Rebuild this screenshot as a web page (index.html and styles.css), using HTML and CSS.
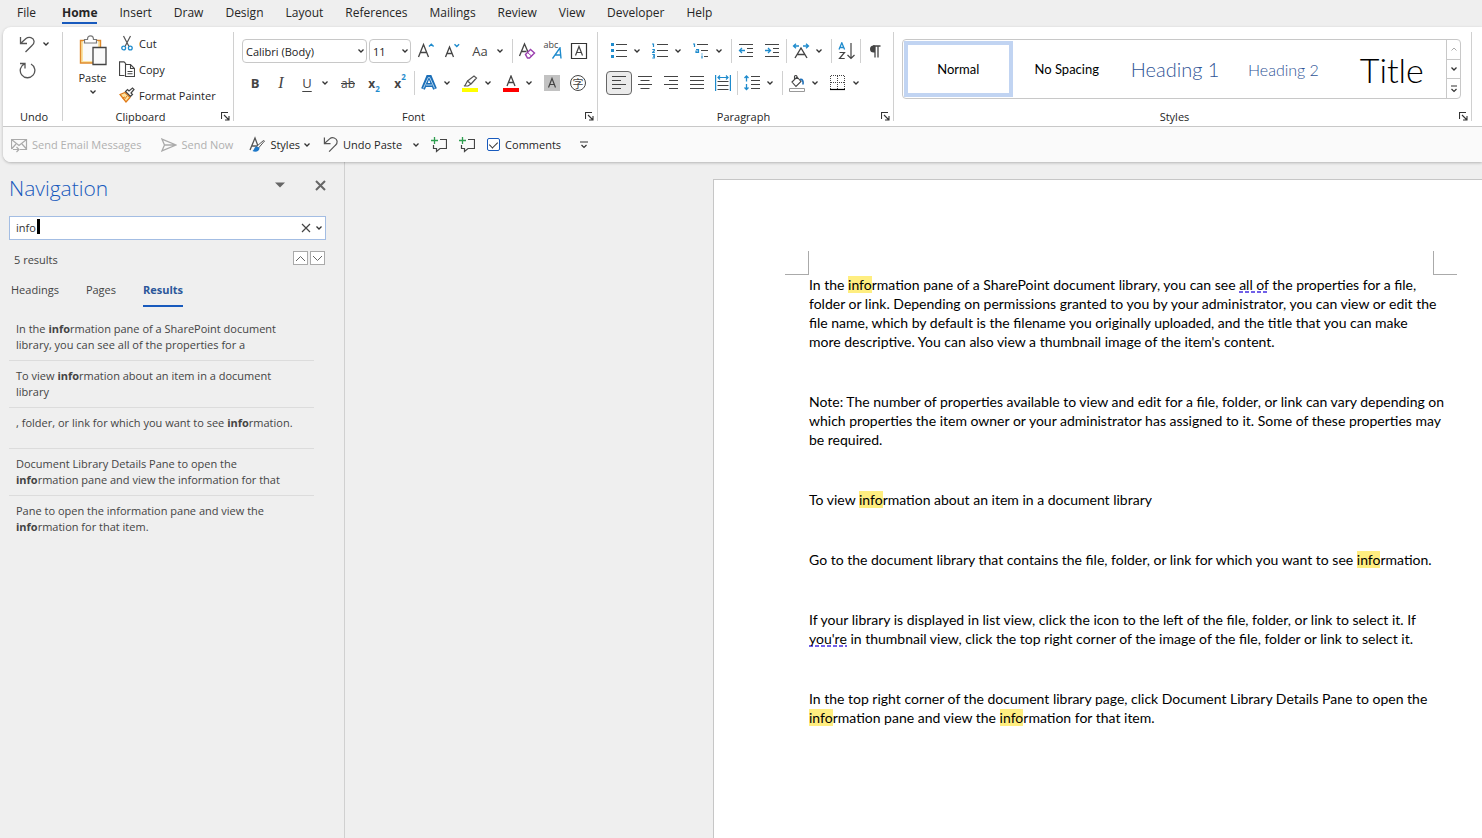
FILE: index.html
```html
<!DOCTYPE html>
<html lang="en">
<head>
    <meta charset="UTF-8">
    <title>Document - Word</title>
    <link rel="stylesheet" href="styles.css">
</head>
<body>
    <!-- Shared icons -->
    <svg class="defs" width="0" height="0" aria-hidden="true">
        <symbol id="chev" viewBox="0 0 8 6"><path d="M1.5 1.5 4 4l2.5-2.5" fill="none" stroke="#333" stroke-width="1.3"/></symbol>
        <symbol id="launch" viewBox="0 0 9 9"><path d="M.5 7V.5H7M3 3l4.500 4.500M8 4v4H4" fill="none" stroke="#333" stroke-width="1.1"/></symbol>
        <symbol id="undo" viewBox="0 0 17 17"><path d="M1.500 1v6.500H8M1.500 7.500 7 2.500c3-2.400 7.500-.8 8 2.500.3 2-.7 3.400-2 4.500L6.500 16" fill="none" stroke="#555" stroke-width="1.3"/></symbol>
        <symbol id="comment" viewBox="0 0 16 16"><path d="M9 2.500h6.500v9H9l-3.500 3v-3h-3V8" fill="none" stroke="#444" stroke-width="1.2"/><path d="M3.500 0v7M0 3.500h7" stroke="#2e9e4f" stroke-width="1.3"/></symbol>
    </svg>

    <nav class="tabs">
        <a href="#" class="file">File</a>
        <a href="#" class="active">Home</a>
        <a href="#">Insert</a>
        <a href="#">Draw</a>
        <a href="#">Design</a>
        <a href="#">Layout</a>
        <a href="#">References</a>
        <a href="#">Mailings</a>
        <a href="#">Review</a>
        <a href="#">View</a>
        <a href="#">Developer</a>
        <a href="#">Help</a>
    </nav>

    <header class="ribbon">
        <div class="groups">
            <!-- Undo -->
            <section class="group undo-group">
                <div class="group-body undo-body">
                    <div class="row">
                        <button class="btn" aria-label="Undo"><svg width="17" height="17"><use href="#undo"/></svg></button>
                        <button class="chev" aria-label="Undo list"><svg width="8" height="6"><use href="#chev"/></svg></button>
                    </div>
                    <button class="btn" aria-label="Redo"><svg width="17" height="17" viewBox="0 0 17 17"><path d="M1 1.500h5V6.500M5.500 1.800A7.300 7.300 0 1 0 12 2" fill="none" stroke="#555" stroke-width="1.3"/></svg></button>
                </div>
                <div class="group-foot"><span>Undo</span></div>
            </section>

            <!-- Clipboard -->
            <section class="group clip-group">
                <div class="group-body clip-body">
                    <button class="paste">
                        <svg width="28" height="31" viewBox="0 0 28 31">
                            <path d="M1.500 5.500h20V28h-20z" fill="#fbe3a3" stroke="#e08a2c" stroke-width="1.400"/>
                            <path d="M4 6h15v20H4z" fill="#fafafa"/>
                            <path d="M5.500 8V4.500h3C8.500 2 9.800.8 11.500.8s3 1.200 3 3.700h3V8z" fill="#fff" stroke="#777" stroke-width="1.200"/>
                            <path d="M14 12.500h13v17H14z" fill="#fafafa" stroke="#444" stroke-width="1.300"/>
                        </svg>
                        <span>Paste</span>
                        <svg width="8" height="6"><use href="#chev"/></svg>
                    </button>
                    <div class="clip-list">
                        <button><svg width="16" height="16" viewBox="0 0 16 16"><path d="M4.500 1 10 11.500M11.500 1 6 11.500" stroke="#555" stroke-width="1.200"/><circle cx="4.700" cy="13" r="1.900" fill="none" stroke="#1e8bcd" stroke-width="1.300"/><circle cx="11.300" cy="13" r="1.900" fill="none" stroke="#1e8bcd" stroke-width="1.300"/></svg>Cut</button>
                        <button><svg width="16" height="16" viewBox="0 0 16 16"><path d="M5.500 14.500h-5V.8h4.500l2 2" fill="none" stroke="#444" stroke-width="1.200"/><path d="M6.500 3.500h5l4 4v8h-9zM11.500 3.500v4h4M8.500 10.500h5M8.500 12.800h5" fill="none" stroke="#444" stroke-width="1.100"/></svg>Copy</button>
                        <button><svg width="16" height="16" viewBox="0 0 16 16"><path d="m1 7.500 5-2 5 5L7 15z" fill="#fbe3a3" stroke="#e07b1a" stroke-width="1.300"/><path d="m3 11 3-1M5 13l3-4" stroke="#e07b1a"/><path d="m6.500 4.500 5 5 2-2-1.500-1.500 3-3.500L13.500 1l-3.500 3-1.500-1.500z" fill="#fff" stroke="#444" stroke-width="1.200"/></svg>Format Painter</button>
                    </div>
                </div>
                <div class="group-foot"><span>Clipboard</span><button aria-label="Clipboard options"><svg width="9" height="9"><use href="#launch"/></svg></button></div>
            </section>

            <!-- Font -->
            <section class="group">
                <div class="group-body">
                    <div class="row">
                        <div class="combo combo-font">
                            <select aria-label="Font"><option>Calibri (Body)</option></select>
                            <svg width="8" height="6"><use href="#chev"/></svg>
                        </div>
                        <div class="combo combo-size">
                            <select aria-label="Font size"><option>11</option></select>
                            <svg width="8" height="6"><use href="#chev"/></svg>
                        </div>
                        <button class="btn" aria-label="Grow font"><svg width="18" height="18" viewBox="0 0 18 18"><path d="m1.500 15 5-12.500 5 12.500M3.300 10.500h6.400" fill="none" stroke="#444" stroke-width="1.300"/><path d="m12 4.500 2.300-2.300 2.300 2.300" fill="none" stroke="#1e8bcd" stroke-width="1.400"/></svg></button>
                        <button class="btn" aria-label="Shrink font"><svg width="18" height="18" viewBox="0 0 18 18"><path d="m2.500 15 4-10 4 10M4 11.500h5" fill="none" stroke="#444" stroke-width="1.300"/><path d="m11.500 2.200 2.300 2.300 2.300-2.300" fill="none" stroke="#1e8bcd" stroke-width="1.400"/></svg></button>
                        <div class="split">
                            <button class="btn case" aria-label="Change case">Aa</button>
                            <button class="chev" aria-label="Case options"><svg width="8" height="6"><use href="#chev"/></svg></button>
                        </div>
                        <i class="sep"></i>
                        <button class="btn" aria-label="Clear formatting"><svg width="18" height="18" viewBox="0 0 18 18"><path d="M1.500 14 6.500 2l3.500 8M3.500 9.500h5" fill="none" stroke="#444" stroke-width="1.300"/><path d="m7.500 12.500 5-5 4 3.500-5 5h-2z" fill="#fff" stroke="#9a3fae" stroke-width="1.400"/><path d="m9.500 10.500 4 3.500" stroke="#9a3fae"/></svg></button>
                        <button class="btn phonetic" aria-label="Phonetic guide"><span>abc</span><svg width="10" height="12" viewBox="0 0 10 12"><path d="M.5 11.500 8 .8l1 10.700M3 8h6" fill="none" stroke="#1e8bcd" stroke-width="1.400"/></svg></button>
                        <button class="btn" aria-label="Character border"><svg width="18" height="18" viewBox="0 0 18 18"><path d="M1.500 1.500h15v15h-15z" fill="none" stroke="#333" stroke-width="1.200"/><path d="M5.500 13.500 9 4.500l3.500 9M6.700 10.500h4.600" fill="none" stroke="#444" stroke-width="1.200"/></svg></button>
                    </div>
                    <div class="row">
                        <button class="btn bold">B</button>
                        <button class="btn italic">I</button>
                        <div class="split">
                            <button class="btn underline">U</button>
                            <button class="chev" aria-label="Underline style"><svg width="8" height="6"><use href="#chev"/></svg></button>
                        </div>
                        <button class="btn strike">ab</button>
                        <button class="btn script">x<sub>2</sub></button>
                        <button class="btn script">x<sup>2</sup></button>
                        <i class="sep"></i>
                        <div class="split">
                            <button class="btn" aria-label="Text effects"><svg width="16" height="16" viewBox="0 0 16 16"><path d="M2 14 7 2h2l5 12M4.500 10h7" fill="none" stroke="#1c6fb8" stroke-width="4"/><path d="m2.300 13.500 5-11h1.400l5 11M4.800 10h6.400" fill="none" stroke="#d9ecfa" stroke-width=".8"/></svg></button>
                            <button class="chev" aria-label="Effect options"><svg width="8" height="6"><use href="#chev"/></svg></button>
                        </div>
                        <div class="split">
                            <button class="btn" aria-label="Highlight"><svg width="16" height="17" viewBox="0 0 16 17"><path d="M0 13h16v4H0z" fill="#ff0"/><path d="M3 10.500 5.500 6l3.500 3-3 2H2zM5.500 6 12 1l2.500 2L9 9" fill="#fff" stroke="#555" stroke-width="1.200"/></svg></button>
                            <button class="chev" aria-label="Highlight colors"><svg width="8" height="6"><use href="#chev"/></svg></button>
                        </div>
                        <div class="split">
                            <button class="btn" aria-label="Font color"><svg width="16" height="17" viewBox="0 0 16 17"><path d="M0 13h16v4H0z" fill="#f00"/><path d="m4 11 4-10 4 10M5.500 7.500h5" fill="none" stroke="#444" stroke-width="1.300"/></svg></button>
                            <button class="chev" aria-label="Font colors"><svg width="8" height="6"><use href="#chev"/></svg></button>
                        </div>
                        <button class="btn" aria-label="Character shading"><svg width="16" height="16" viewBox="0 0 16 16"><path d="M0 0h16v16H0z" fill="#c2c2c2"/><path d="m4.500 12.500 3.500-9 3.500 9M5.700 9.500h4.600" fill="none" stroke="#444" stroke-width="1.200"/></svg></button>
                        <button class="btn"><span class="enclosed">字</span></button>
                    </div>
                </div>
                <div class="group-foot"><span>Font</span><button aria-label="Font options"><svg width="9" height="9"><use href="#launch"/></svg></button></div>
            </section>

            <!-- Paragraph -->
            <section class="group">
                <div class="group-body">
                    <div class="row">
                        <div class="split">
                            <button class="btn" aria-label="Bullets"><svg width="16" height="16" viewBox="0 0 16 16"><path d="M0 0h3v3H0zM0 6h3v3H0zM0 12h3v3H0z" fill="#1e8bcd"/><path d="M5 1.500h11M5 7.500h11M5 13.500h11" stroke="#444"/></svg></button>
                            <button class="chev" aria-label="Bullet library"><svg width="8" height="6"><use href="#chev"/></svg></button>
                        </div>
                        <div class="split">
                            <button class="btn" aria-label="Numbering"><svg width="16" height="16" viewBox="0 0 16 16"><path d="M0 1h1.500v3M.3 6.500h2v1.200L.5 9.500h2.300M.3 11.500h2v3.500h-2M1 13.200h1.300" fill="none" stroke="#1e8bcd" stroke-width="1.200"/><path d="M5 1.500h11M5 7.500h11M5 13.500h11" stroke="#444"/></svg></button>
                            <button class="chev" aria-label="Numbering library"><svg width="8" height="6"><use href="#chev"/></svg></button>
                        </div>
                        <div class="split">
                            <button class="btn" aria-label="Multilevel list"><svg width="16" height="16" viewBox="0 0 16 16"><path d="M0 1h1.500v3M3 6.500h2.500v3H3V8h2.500M9 10.500v1M9 12.500v3" fill="none" stroke="#1e8bcd" stroke-width="1.200"/><path d="M4 1.500h11M8 7.500h7M11 13.500h4" stroke="#444"/></svg></button>
                            <button class="chev" aria-label="List library"><svg width="8" height="6"><use href="#chev"/></svg></button>
                        </div>
                        <i class="sep"></i>
                        <button class="btn" aria-label="Decrease indent"><svg width="16" height="14" viewBox="0 0 16 14"><path d="M1 .5h14M9 4.500h6M9 8.500h6M1 12.500h14" stroke="#444"/><path d="M7 6.500H1.500M4 4 1.500 6.500 4 9" fill="none" stroke="#1e8bcd" stroke-width="1.300"/></svg></button>
                        <button class="btn" aria-label="Increase indent"><svg width="16" height="14" viewBox="0 0 16 14"><path d="M1 .5h14M9 4.500h6M9 8.500h6M1 12.500h14" stroke="#444"/><path d="M1 6.500h5.500M4 4l2.500 2.500L4 9" fill="none" stroke="#1e8bcd" stroke-width="1.300"/></svg></button>
                        <i class="sep"></i>
                        <div class="split">
                            <button class="btn" aria-label="Asian layout"><svg width="18" height="16" viewBox="0 0 18 16"><path d="m3 15 6-10 6 10M5.500 11.500h7" fill="none" stroke="#444" stroke-width="1.400"/><path d="M7 3H1.500M4 .8 1.500 3 4 5.200M11 3h5.500M14 .8 16.500 3 14 5.200" fill="none" stroke="#1e8bcd" stroke-width="1.300"/></svg></button>
                            <button class="chev" aria-label="Asian layout options"><svg width="8" height="6"><use href="#chev"/></svg></button>
                        </div>
                        <i class="sep"></i>
                        <button class="btn" aria-label="Sort"><svg width="17" height="18" viewBox="0 0 17 18"><path d="M1 7.500 3.800.8l2.800 6.700M2 5.500h3.600" fill="none" stroke="#1e8bcd" stroke-width="1.300"/><path d="M1.500 10.500h5L1.500 16.500h5.200M13 1v15.500M9.500 13l3.500 3.500 3.500-3.500" fill="none" stroke="#444" stroke-width="1.200"/></svg></button>
                        <i class="sep"></i>
                        <button class="btn" aria-label="Show marks"><svg width="12" height="13" viewBox="0 0 12 13"><path d="M6 .5H4.500a3.500 3.500 0 0 0 0 7H6z" fill="#444"/><path d="M4 1h7.500M6 1v11.500M9 1v11.500" stroke="#444" stroke-width="1.300"/></svg></button>
                    </div>
                    <div class="row">
                        <button class="btn pressed" aria-label="Align left"><svg width="14" height="14" viewBox="0 0 14 14"><path d="M0 .5h14M0 4.500h9M0 8.500h14M0 12.500h9" stroke="#444"/></svg></button>
                        <button class="btn" aria-label="Center"><svg width="14" height="14" viewBox="0 0 14 14"><path d="M0 .5h14M2.500 4.500h9M0 8.500h14M2.500 12.500h9" stroke="#444"/></svg></button>
                        <button class="btn" aria-label="Align right"><svg width="14" height="14" viewBox="0 0 14 14"><path d="M0 .5h14M5 4.500h9M0 8.500h14M5 12.500h9" stroke="#444"/></svg></button>
                        <button class="btn" aria-label="Justify"><svg width="14" height="14" viewBox="0 0 14 14"><path d="M0 .5h14M0 4.500h14M0 8.500h14M0 12.500h14" stroke="#444"/></svg></button>
                        <button class="btn" aria-label="Distributed"><svg width="16" height="16" viewBox="0 0 16 16"><path d="M.6 0v16M15.400 0v16M3 2.500h10M5 .5l-2 2 2 2M11 .5l2 2-2 2" fill="none" stroke="#1e8bcd" stroke-width="1.200"/><path d="M2.500 6.500h11M2.500 10.500h11M2.500 14.500h11" stroke="#444"/></svg></button>
                        <i class="sep"></i>
                        <div class="split">
                            <button class="btn" aria-label="Line spacing"><svg width="16" height="16" viewBox="0 0 16 16"><path d="M2.500 1v5.500M.5 3l2-2 2 2M2.500 9v5.500M.5 12.500l2 2 2-2" fill="none" stroke="#1e8bcd" stroke-width="1.300"/><path d="M7 1.500h9M7 5.500h9M7 9.500h9M7 13.500h9" stroke="#444"/></svg></button>
                            <button class="chev" aria-label="Spacing options"><svg width="8" height="6"><use href="#chev"/></svg></button>
                        </div>
                        <i class="sep"></i>
                        <div class="split">
                            <button class="btn" aria-label="Shading"><svg width="16" height="17" viewBox="0 0 16 17"><path d="M.5 13.500h15v3H.5z" fill="#fff" stroke="#999"/><path d="m3 7 5-5 4 4.500-5 5zM8 4V1.500a1.300 1.300 0 0 0-2.500 0V4" fill="#fff" stroke="#444" stroke-width="1.100"/><path d="M11 4.500c2.500-.5 3.500 1.500 3 5" fill="none" stroke="#1e6fb8" stroke-width="1.600"/></svg></button>
                            <button class="chev" aria-label="Shading colors"><svg width="8" height="6"><use href="#chev"/></svg></button>
                        </div>
                        <div class="split">
                            <button class="btn" aria-label="Borders"><svg width="16" height="16" viewBox="0 0 16 16"><path d="M1 .5h14M1 7.500h14M.5 1v13M7.500 1v13M14.500 1v13" fill="none" stroke="#444" stroke-dasharray="1 1"/><path d="M0 14.500h15" stroke="#000" stroke-width="1.200"/></svg></button>
                            <button class="chev" aria-label="Border options"><svg width="8" height="6"><use href="#chev"/></svg></button>
                        </div>
                    </div>
                </div>
                <div class="group-foot"><span>Paragraph</span><button aria-label="Paragraph options"><svg width="9" height="9"><use href="#launch"/></svg></button></div>
            </section>

            <!-- Styles -->
            <section class="group styles-group">
                <div class="group-body">
                    <div class="gallery">
                        <button class="style selected">Normal</button>
                        <button class="style">No Spacing</button>
                        <button class="style h1">Heading 1</button>
                        <button class="style h2">Heading 2</button>
                        <button class="style title">Title</button>
                        <div class="gallery-nav">
                            <button aria-label="Scroll up" disabled><svg width="8" height="6" viewBox="0 0 8 6"><path d="M1.500 4.500 4 2l2.500 2.500" fill="none" stroke="#aaa"/></svg></button>
                            <button aria-label="Scroll down"><svg width="8" height="6"><use href="#chev"/></svg></button>
                            <button aria-label="More styles"><svg width="8" height="8" viewBox="0 0 8 8"><path d="M1 1h6M1.500 4 4 6.500 6.500 4" fill="none" stroke="#333" stroke-width="1.200"/></svg></button>
                        </div>
                    </div>
                </div>
                <div class="group-foot"><span>Styles</span><button aria-label="Styles options"><svg width="9" height="9"><use href="#launch"/></svg></button></div>
            </section>
        </div>

        <!-- Quick access toolbar -->
        <div class="quick">
            <button class="mail" disabled><svg width="17" height="16" viewBox="0 0 17 16"><path d="M.5 12V2.500h15v10H9M.5 2.500 8 8.500l7.500-6M.5 12l4.500-5M15.500 12 11 7" fill="none" stroke="#aaa" stroke-width="1.200"/><path d="M2 12.500h6M5.500 10 8 12.500 5.500 15" fill="none" stroke="#aaa" stroke-width="1.200"/></svg>Send Email Messages</button>
            <button class="send" disabled><svg width="16" height="14" viewBox="0 0 16 14"><path d="M1 1.200 15 7 1 12.800 3.500 7zM3.500 7H15" fill="none" stroke="#aaa" stroke-width="1.300"/></svg>Send Now</button>
            <button class="styles"><svg width="17" height="17" viewBox="0 0 17 17"><path d="M1 14 6 2l3 8M3 10h5" fill="none" stroke="#555" stroke-width="1.300"/><path d="m15.500 5-6 7-2-1.500 7-6z" fill="#fff" stroke="#555"/><path d="M8 10.500c-3 0-2.500 3-4.500 4.500 3 1.500 7 .5 7-3z" fill="#1e78c8"/></svg>Styles<svg class="arrow" width="8" height="6"><use href="#chev"/></svg></button>
            <button class="undo"><svg width="16" height="17"><use href="#undo"/></svg>Undo Paste<svg class="arrow" width="8" height="6"><use href="#chev"/></svg></button>
            <button class="note" aria-label="New comment"><svg width="16" height="16"><use href="#comment"/></svg></button>
            <button class="note" aria-label="Insert comment"><svg width="16" height="16"><use href="#comment"/></svg></button>
            <label class="check"><input type="checkbox" checked>Comments</label>
            <button aria-label="Customize toolbar"><svg width="8" height="8" viewBox="0 0 8 8"><path d="M0 1h8M1.500 4 4 6.500 6.500 4" fill="none" stroke="#333" stroke-width="1.200"/></svg></button>
        </div>
    </header>

    <main class="workspace">
        <aside class="nav-pane">
            <div class="nav-head">
                <h2>Navigation</h2>
                <button aria-label="Pane options"><svg width="10" height="6" viewBox="0 0 10 6"><path d="M0 .5h10L5 5.500z" fill="#666"/></svg></button>
                <button aria-label="Close pane"><svg width="11" height="11" viewBox="0 0 11 11"><path d="m1 1 9 9M10 1l-9 9" stroke="#666" stroke-width="2"/></svg></button>
            </div>
            <div class="search">
                <input type="text" value="info" aria-label="Search document">
                <span class="caret"></span>
                <button aria-label="Clear search"><svg width="10" height="10" viewBox="0 0 10 10"><path d="m1 1 8 8M9 1 1 9" stroke="#444" stroke-width="1.200"/></svg></button>
                <button aria-label="Search options"><svg width="8" height="6"><use href="#chev"/></svg></button>
            </div>
            <div class="count">
                <span>5 results</span>
                <button aria-label="Previous result"><svg width="11" height="7" viewBox="0 0 11 7"><path d="m1 6 4.500-4.500L10 6" fill="none" stroke="#666"/></svg></button>
                <button aria-label="Next result"><svg width="11" height="7" viewBox="0 0 11 7"><path d="m1 1 4.500 4.500L10 1" fill="none" stroke="#666"/></svg></button>
            </div>
            <div class="nav-tabs">
                <a href="#">Headings</a>
                <a href="#">Pages</a>
                <a href="#" class="active">Results</a>
            </div>
            <ul class="results">
                <li>In the <b>info</b>rmation pane of a SharePoint document<br>library, you can see all of the properties for a</li>
                <li>To view <b>info</b>rmation about an item in a document<br>library</li>
                <li class="single">, folder, or link for which you want to see <b>info</b>rmation.</li>
                <li>Document Library Details Pane to open the<br><b>info</b>rmation pane and view the information for that</li>
                <li>Pane to open the information pane and view the<br><b>info</b>rmation for that item.</li>
            </ul>
        </aside>

        <div class="canvas">
            <article class="page">
                <span class="crop crop-left"></span>
                <span class="crop crop-right"></span>
                <p>In the <mark>info</mark>rmation pane of a SharePoint document library, you can see <span class="grammar">all of</span> the properties for a file,<br>
                folder or link. Depending on permissions granted to you by your administrator, you can view or edit the<br>
                file name, which by default is the filename you originally uploaded, and the title that you can make<br>
                more descriptive. You can also view a thumbnail image of the item's content.</p>
                <p>Note: The number of properties available to view and edit for a file, folder, or link can vary depending on<br>
                which properties the item owner or your administrator has assigned to it. Some of these properties may<br>
                be required.</p>
                <p>To view <mark>info</mark>rmation about an item in a document library</p>
                <p>Go to the document library that contains the file, folder, or link for which you want to see <mark>info</mark>rmation.</p>
                <p>If your library is displayed in list view, click the icon to the left of the file, folder, or link to select it. If<br>
                <span class="grammar">you're</span> in thumbnail view, click the top right corner of the image of the file, folder or link to select it.</p>
                <p>In the top right corner of the document library page, click Document Library Details Pane to open the<br>
                <mark>info</mark>rmation pane and view the <mark>info</mark>rmation for that item.</p>
            </article>
        </div>
    </main>
</body>
</html>
```
FILE: styles.css
```css
* {
    box-sizing: border-box;
}

body {
    margin: 0;
    height: 100vh;
    display: flex;
    flex-direction: column;
    overflow: hidden;
    background: #efefef;
    color: #262626;
    font-family: "Open Sans", "Noto Sans", sans-serif;
    font-size: 11px;
}

button {
    display: flex;
    align-items: center;
    justify-content: center;
    padding: 0;
    border: none;
    background: none;
    color: inherit;
    font: inherit;
    white-space: nowrap;
}

svg {
    display: block;
    flex: none;
}

.defs {
    position: absolute;
}

a {
    color: inherit;
    text-decoration: none;
}

/* Tabs */
.tabs {
    display: flex;
    height: 27px;
    padding-left: 6px;
    font-size: 12px;
    line-height: 25px;
}

.tabs a {
    margin: 0 11px;
    height: 24px;
}

.tabs .file {
    margin-right: 15px;
}

.tabs .active {
    font-weight: bold;
    border-bottom: 2px solid #185abd;
}

/* Ribbon */
.ribbon {
    margin-left: 3px;
    border-radius: 8px 0 0 8px;
    background: #fff;
    box-shadow: 0 1px 3px rgba(0,0,0,0.25);
    z-index: 1;
}

.groups {
    display: flex;
    height: 100px;
    padding: 5px 10px 5px 0;
    border-bottom: 1px solid #c8c8c8;
}

.group {
    display: flex;
    flex-direction: column;
    justify-content: space-between;
    border-right: 1px solid #d0d0d0;
    padding: 7px 3px 0 8px;
}

.group-body {
    display: flex;
    flex-direction: column;
    gap: 8px;
    padding-right: 2px;
}

.group-foot {
    display: flex;
    align-items: center;
    height: 10px;
}

.group-foot span {
    flex: 1;
    text-align: center;
}

.row, .split {
    display: flex;
    align-items: center;
}

.row {
    height: 24px;
}

.btn {
    width: 26px;
    height: 24px;
    font-size: 14px;
    color: #444;
}

.chev {
    width: 10px;
    height: 24px;
}

.split {
    margin-right: 5px;
}

.sep {
    width: 1px;
    height: 24px;
    margin: 0 1px;
    background: #d0d0d0;
}

.split + .sep {
    margin-left: 2px;
}

.pressed {
    border: 1px solid #666;
    border-radius: 4px;
    background: #ebebeb;
}

.undo-group {
    width: 60px;
    padding: 0 0 0 11px;
}

.undo-group .group-foot {
    padding-right: 8px;
}

.undo-body {
    gap: 2px;
}

.undo-body .row {
    gap: 1px;
}

.clip-group {
    width: 171px;
    padding: 0 3px 0 13px;
}

.clip-body {
    flex-direction: row;
    align-items: flex-start;
    gap: 10px;
    height: 76px;
}

.clip-group .group-foot span {
    margin-left: -16px;
}

.paste {
    flex-direction: column;
    justify-content: flex-start;
    gap: 4px;
    width: 33px;
    padding-top: 3px;
}

.clip-list {
    margin-top: -2px;
}

.clip-list button {
    height: 26px;
    gap: 4px;
}

.combo {
    position: relative;
    margin-right: 2px;
}

.combo select {
    width: 100%;
    height: 24px;
    padding: 0 3px;
    appearance: none;
    border: 1px solid #c8c8c8;
    border-radius: 4px;
    background: #fff;
    color: #222;
    font: inherit;
}

.combo svg {
    position: absolute;
    right: 2px;
    top: 9px;
    pointer-events: none;
}

.combo-font {
    width: 125px;
}

.combo-size {
    width: 42px;
}

.case {
    width: 30px;
    font-size: 13px;
}

.phonetic {
    align-items: flex-start;
    font-size: 9px;
    line-height: 12px;
}

.phonetic svg {
    margin: 8px 0 0 -6px;
}

.bold {
    font-size: 13px;
    font-weight: bold;
}

.italic {
    font-family: "Liberation Serif", serif;
    font-style: italic;
    font-size: 16px;
}

.underline {
    font-size: 13px;
    text-decoration: underline;
    text-underline-offset: 3px;
}

.strike {
    font-size: 12px;
    text-decoration: line-through;
}

.script {
    font-size: 12px;
    font-weight: bold;
}

.script sub, .script sup {
    color: #1e8bcd;
    font-size: 8px;
    line-height: 12px;
}

.script sub {
    align-self: flex-end;
}

.script sup {
    align-self: flex-start;
}

.enclosed {
    width: 16px;
    height: 16px;
    border: 1px solid #444;
    border-radius: 50%;
    font-family: "Noto Sans CJK SC", sans-serif;
    font-size: 11px;
    line-height: 14px;
}

/* Styles gallery */
.styles-group {
    flex: 1;
}

.styles-group .group-body {
    padding-right: 7px;
}

.styles-group .group-foot span {
    margin-left: -12px;
}

.gallery {
    display: flex;
    height: 60px;
    border: 1px solid #c8c8c8;
    border-radius: 4px;
    padding-left: 1px;
}

.style {
    flex: 0 1 20%;
    min-width: 0;
    margin: 1px 0;
    color: #000;
    font-family: Lato, sans-serif;
    font-size: 13px;
}

.style.selected {
    border: 4px solid #c1d4f2;
}

.style.h1 {
    color: #2f5496;
    font-size: 20px;
    font-weight: 300;
}

.style.h2 {
    color: #2f5496;
    font-size: 16px;
    font-weight: 300;
}

.style.title {
    font-size: 34px;
    font-weight: 300;
}

.gallery-nav {
    flex: none;
    display: flex;
    flex-direction: column;
    width: 14px;
    border-left: 1px solid #c8c8c8;
}

.gallery-nav button {
    flex: 1;
}

.gallery-nav button + button {
    border-top: 1px solid #c8c8c8;
}

/* Quick access toolbar */
.quick {
    display: flex;
    align-items: center;
    height: 35px;
    padding-left: 8px;
    border-radius: 0 0 0 8px;
    background: #fafafa;
}

.quick button {
    gap: 4px;
}

.quick button:disabled {
    color: #b0b0b0;
}

.mail {
    margin-right: 20px;
}

.send {
    margin-right: 16px;
}

.quick .styles {
    margin-right: 12px;
}

.quick .styles .arrow {
    margin-left: -1px;
}

.quick .undo {
    margin-right: 11px;
}

.undo .arrow {
    margin-left: 6px;
}

.note {
    margin-right: 12px;
}

.check {
    display: flex;
    align-items: center;
    gap: 5px;
    margin-right: 19px;
}

.check input {
    appearance: none;
    width: 13px;
    height: 13px;
    margin: 0;
    border: 1px solid #185abd;
    border-radius: 2px;
    background: #fff;
    display: grid;
    place-items: center;
}

.check input:checked::before {
    content: "";
    width: 4px;
    height: 7px;
    margin-bottom: 2px;
    border: solid #333;
    border-width: 0 1px 1px 0;
    transform: rotate(45deg);
}

/* Workspace */
.workspace {
    flex: 1;
    display: flex;
    min-height: 0;
}

.nav-pane {
    flex: none;
    width: 345px;
    padding: 11px 18px 0 9px;
    border-right: 1px solid #d0d0d0;
    color: #444;
}

.nav-head {
    display: flex;
    align-items: center;
    gap: 30px;
    height: 30px;
}

.nav-head h2 {
    flex: 1;
    margin: 0;
    color: #185abd;
    font-size: 21px;
    font-weight: 300;
}

.nav-head button {
    margin-bottom: 6px;
}

.search {
    position: relative;
    display: flex;
    gap: 4px;
    height: 24px;
    margin-top: 13px;
    padding: 0 2px 0 6px;
    border: 1px solid #a3bde3;
    background: #fff;
}

.search input {
    flex: 1;
    min-width: 0;
    padding: 0 0 2px;
    border: none;
    outline: none;
    background: none;
    color: #333;
    font: inherit;
}

.caret {
    position: absolute;
    left: 27px;
    top: 2px;
    width: 3px;
    height: 15px;
    background: #000;
}

.count {
    display: flex;
    align-items: center;
    gap: 2px;
    height: 36px;
    padding: 0 1px 0 5px;
}

.count span {
    flex: 1;
    padding-top: 3px;
}

.count button {
    width: 15px;
    height: 14px;
    border: 1px solid #aaa;
    background: #fff;
}

.nav-tabs {
    display: flex;
    gap: 27px;
    padding-left: 2px;
    line-height: 28px;
}

.nav-tabs .active {
    color: #2b579a;
    font-weight: bold;
    padding-bottom: 1px;
    border-bottom: 2px solid #185abd;
}

.results {
    margin: 7px 12px 0 0;
    padding: 0;
    list-style: none;
    line-height: 16px;
    white-space: nowrap;
}

.results li {
    padding: 7px;
    border-bottom: 1px solid #dcdcdc;
}

.results .single {
    padding-bottom: 17px;
}

.results li:last-child {
    border-bottom: none;
}

/* Document */
.canvas {
    flex: 1;
    min-width: 0;
    padding: 17px 0 0 368px;
    overflow: hidden;
}

.page {
    position: relative;
    width: 816px;
    height: 1056px;
    padding: 95px;
    border: 1px solid #c6c6c6;
    background: #fff;
    color: #000;
    font-family: Lato, sans-serif;
    font-size: 14px;
    line-height: 19px;
    white-space: nowrap;
}

.page p {
    margin: 0 0 41px;
}

.page mark {
    background: #ffee80;
    color: inherit;
}

.grammar {
    background: repeating-linear-gradient(90deg, #7160e8 0 4px, transparent 4px 6px) 0 100% / 100% 2px no-repeat;
}

.crop {
    position: absolute;
    top: 71px;
    width: 24px;
    height: 24px;
    border-bottom: 1px solid #aaa;
}

.crop-left {
    left: 71px;
    border-right: 1px solid #aaa;
}

.crop-right {
    left: 719px;
    border-left: 1px solid #aaa;
}
```
